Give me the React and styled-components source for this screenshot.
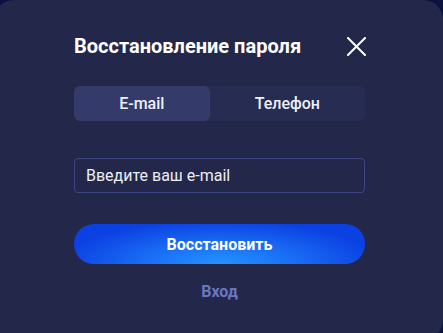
import React, { useState } from "react";
import styled, { createGlobalStyle } from "styled-components";

const Global = createGlobalStyle`
  html, body { margin: 0; padding: 0; background: #0c1240; overflow: hidden; }
  body { font-family: Roboto, "Liberation Sans", sans-serif; }
  * { box-sizing: border-box; }
`;

const Card = styled.div`
  margin-left: -6px;
  width: 449px;
  height: 340px;
  border-radius: 20px;
  background: #23284b;
  padding: 34px 78px 0 80px;
  display: flex;
  flex-direction: column;
`;

const Header = styled.div`
  display: flex;
  align-items: center;
  justify-content: space-between;
  height: 24px;
`;

const Title = styled.h2`
  margin: 0;
  font-size: 20px;
  line-height: 24px;
  font-weight: 700;
  color: #ffffff;
`;

const Close = styled.button`
  width: 20px;
  height: 20px;
  padding: 0;
  border: 0;
  background: none;
  display: flex;
  align-items: center;
  justify-content: center;
  margin-right: -1px;
  cursor: pointer;
`;

const Tabs = styled.div`
  margin-top: 28px;
  display: flex;
  height: 35px;
  border-radius: 6px;
  background: #272c53;
`;

const Tab = styled.button`
  flex: 1 1 auto;
  border: 0;
  border-radius: 6px;
  background: ${(p) => (p.$active ? "#343b6b" : "transparent")};
  color: #eef0f8;
  font-family: Roboto, "Liberation Sans", sans-serif;
  font-size: 16px;
  font-weight: 500;
  cursor: pointer;
`;

const Input = styled.input`
  margin-top: 37px;
  height: 35px;
  width: 100%;
  border: 1px solid #3d4680;
  border-radius: 4px;
  background: transparent;
  padding: 0 11px;
  font-family: Roboto, "Liberation Sans", sans-serif;
  font-size: 16px;
  color: #eceef6;
  outline: none;
  &::placeholder { color: #eceef6; opacity: 1; }
`;

const Submit = styled.button`
  margin-top: 31px;
  height: 40px;
  border: 0;
  border-radius: 20px;
  background: radial-gradient(ellipse 55% 110% at 50% 100%, #2494ff 0%, #1a6ff5 45%, #0b40e2 100%);
  color: #ffffff;
  font-family: Roboto, "Liberation Sans", sans-serif;
  font-size: 16px;
  font-weight: 700;
  cursor: pointer;
`;

const Link = styled.a`
  margin-top: 18px;
  align-self: center;
  font-size: 16px;
  line-height: 20px;
  font-weight: 700;
  color: #6a76c2;
  text-decoration: none;
`;

export default function App() {
  const [tab, setTab] = useState("email");
  return (
    <>
      <Global />
      <Card>
        <Header>
          <Title>Восстановление пароля</Title>
          <Close aria-label="close">
            <svg width="19" height="19" viewBox="0 0 19 19">
              <path d="M1 1 L18 18 M18 1 L1 18" stroke="#fff" strokeWidth="2" strokeLinecap="square" />
            </svg>
          </Close>
        </Header>
        <Tabs>
          <Tab $active={tab === "email"} onClick={() => setTab("email")}>E-mail</Tab>
          <Tab $active={tab === "phone"} onClick={() => setTab("phone")}>Телефон</Tab>
        </Tabs>
        <Input placeholder="Введите ваш e-mail" />
        <Submit>Восстановить</Submit>
        <Link href="#">Вход</Link>
      </Card>
    </>
  );
}
